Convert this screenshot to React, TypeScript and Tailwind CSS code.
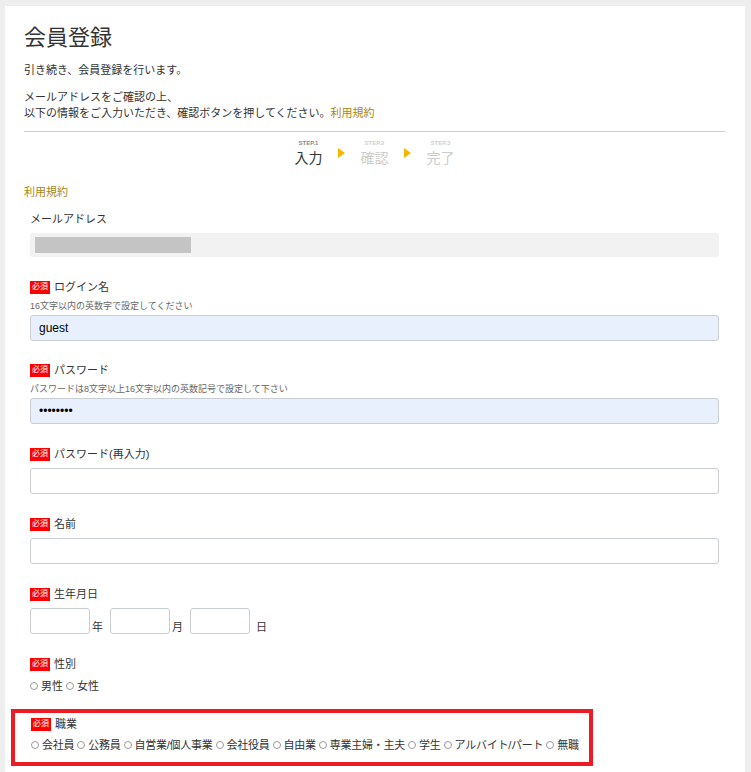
import React from "react";

function Req() {
  return (
    <span className="inline-flex h-[13px] w-[20px] shrink-0 items-center justify-center bg-[#ff0000] text-[8px] leading-none text-white">
      必須
    </span>
  );
}

function Label({ text }: { text: string }) {
  return (
    <div className="flex h-[14px] items-center gap-[4px]">
      <Req />
      <span className="text-[11px] leading-[14px] text-[#333]">{text}</span>
    </div>
  );
}

function Field({
  label,
  hint,
  children,
  className = "",
}: {
  label: string;
  hint?: string;
  children: React.ReactNode;
  className?: string;
}) {
  return (
    <div className={className}>
      <Label text={label} />
      {hint && <p className="mt-[6px] text-[9px] leading-[12px] text-[#666]">{hint}</p>}
      <div className={hint ? "mt-[3px]" : "mt-[7px]"}>{children}</div>
    </div>
  );
}

function Radio({ label }: { label: string }) {
  return (
    <span className="inline-flex items-center">
      <span className="mr-[3px] inline-block h-[8px] w-[8px] rounded-full border border-[#9a9a9a] bg-white" />
      <span>{label}</span>
    </span>
  );
}

function Step({ n, text, active }: { n: number; text: string; active?: boolean }) {
  return (
    <div className="flex w-[52px] flex-col items-center">
      <span
        className={
          "text-[6px] font-bold leading-[8px] " + (active ? "text-[#888]" : "text-[#cfcfcf]")
        }
      >
        STEP.{n}
      </span>
      <span
        className={
          "mt-[2px] text-[14px] leading-[18px] " + (active ? "text-[#333]" : "text-[#cccccc]")
        }
      >
        {text}
      </span>
    </div>
  );
}

function Arrow() {
  return (
    <div className="flex w-[14px] justify-center pt-[9px]">
      <span className="block h-0 w-0 border-y-[5px] border-l-[7px] border-y-transparent border-l-[#f8b500]" />
    </div>
  );
}

const inputBase =
  "block h-[26px] w-full rounded-[3px] border border-[#c9cdd4] px-[8px] text-[12px] text-black outline-none";

export default function App() {
  const jobs = [
    "会社員",
    "公務員",
    "自営業/個人事業",
    "会社役員",
    "自由業",
    "専業主婦・主夫",
    "学生",
    "アルバイト/パート",
    "無職",
  ];
  return (
    <div className="min-h-screen bg-[#eeeeee] pt-[6px] font-[family-name:'Liberation_Sans','Noto_Sans_CJK_JP',sans-serif] text-[#333]">
      <div className="ml-[5px] mr-[6px] bg-white pb-[40px] pl-[19px] pr-[20px] pt-[17px]">
        <h1 className="text-[22px] font-normal leading-[30px] text-[#333]">会員登録</h1>
        <p className="mt-[9px] text-[11px] leading-[16px]">引き続き、会員登録を行います。</p>
        <p className="mt-[11px] text-[11px] leading-[16px]">
          メールアドレスをご確認の上、
          <br />
          以下の情報をご入力いただき、確認ボタンを押してください。
          <span className="text-[#a8860d]">利用規約</span>
        </p>
        <div className="mt-[10px] h-px bg-[#cccccc]" />

        <div className="mt-[7px] flex justify-center">
          <Step n={1} text="入力" active />
          <Arrow />
          <Step n={2} text="確認" />
          <Arrow />
          <Step n={3} text="完了" />
        </div>

        <p className="mt-[17px] text-[11px] leading-[16px] text-[#a8860d]">利用規約</p>

        <div className="px-[6px]">
          <div className="mt-[11px]">
            <p className="text-[11px] leading-[16px]">メールアドレス</p>
            <div className="mt-[6px] flex h-[24px] items-center rounded-[3px] bg-[#f2f2f2] px-[5px]">
              <div className="h-[16px] w-[156px] bg-[#c4c4c4]" />
            </div>
          </div>

          <Field
            className="mt-[23px]"
            label="ログイン名"
            hint="16文字以内の英数字で設定してください"
          >
            <input readOnly defaultValue="guest" className={inputBase + " bg-[#e8f0fe]"} />
          </Field>

          <Field
            className="mt-[22px]"
            label="パスワード"
            hint="パスワードは8文字以上16文字以内の英数記号で設定して下さい"
          >
            <input
              readOnly
              type="password"
              defaultValue="password"
              className={inputBase + " bg-[#e8f0fe]"}
            />
          </Field>

          <Field className="mt-[23px]" label="パスワード(再入力)">
            <input readOnly className={inputBase + " bg-white"} />
          </Field>

          <Field className="mt-[23px]" label="名前">
            <input readOnly className={inputBase + " bg-white"} />
          </Field>

          <Field className="mt-[23px]" label="生年月日">
            <div className="flex items-end text-[11px] leading-[14px]">
              <input readOnly className="block h-[26px] w-[60px] rounded-[3px] border border-[#c9cdd4] bg-white outline-none" />
              <span className="ml-[2px] mr-[7px]">年</span>
              <input readOnly className="block h-[26px] w-[60px] rounded-[3px] border border-[#c9cdd4] bg-white outline-none" />
              <span className="ml-[2px] mr-[7px]">月</span>
              <input readOnly className="block h-[26px] w-[60px] rounded-[3px] border border-[#c9cdd4] bg-white outline-none" />
              <span className="ml-[6px]">日</span>
            </div>
          </Field>

          <div className="mt-[23px]">
            <Label text="性別" />
            <div className="mt-[7px] flex gap-[3px] text-[11px] leading-[16px]">
              <Radio label="男性" />
              <Radio label="女性" />
            </div>
          </div>

          <div className="ml-[-19px] mt-[15px] w-[582px] border-4 border-[#ed1c24] pb-[9px] pl-[16px] pt-[4px]">
            <Label text="職業" />
            <div className="mt-[6px] flex gap-[3px] whitespace-nowrap text-[11px] leading-[16px] tracking-[-0.25px]">
              {jobs.map((j) => (
                <Radio key={j} label={j} />
              ))}
            </div>
          </div>
        </div>
      </div>
    </div>
  );
}
